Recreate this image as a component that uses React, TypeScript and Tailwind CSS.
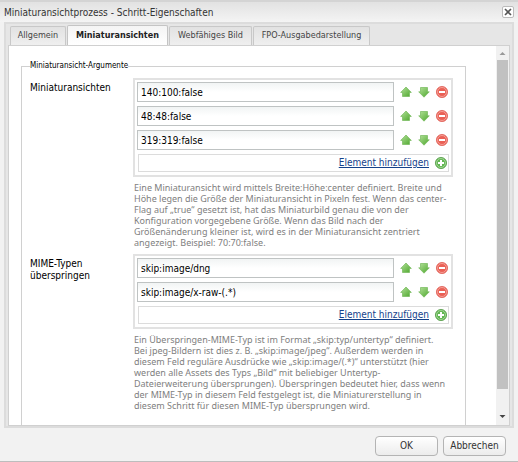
import type { ReactNode } from "react";

function ArrowUp() {
  return (
    <svg width="12" height="12" viewBox="0 0 12 12" aria-hidden="true">
      <defs>
        <linearGradient id="green" x1="0" y1="0" x2="1" y2="1">
          <stop offset="0" stopColor="#b4e29a" />
          <stop offset="1" stopColor="#4ca62c" />
        </linearGradient>
      </defs>
      <path d="M6 1 L11.3 6.4 L9.5 6.4 L9.5 10.5 L2.5 10.5 L2.5 6.4 L0.7 6.4 Z" fill="url(#green)" stroke="#74b95a" strokeWidth="0.7" />
    </svg>
  );
}

function ArrowDown() {
  return (
    <svg width="12" height="12" viewBox="0 0 12 12" aria-hidden="true">
      <path d="M6 11.2 L11.3 5.8 L9.5 5.8 L9.5 1.5 L2.5 1.5 L2.5 5.8 L0.7 5.8 Z" fill="url(#green)" stroke="#74b95a" strokeWidth="0.7" />
    </svg>
  );
}

function Minus() {
  return (
    <svg width="14" height="14" viewBox="0 0 14 14" aria-hidden="true">
      <circle cx="7" cy="7" r="5.6" fill="#ea6055" stroke="#df6259" strokeWidth="0.8" />
      <circle cx="7" cy="7" r="4.5" fill="none" stroke="#f7aca5" strokeWidth="0.8" />
      <rect x="4" y="6" width="6" height="2" fill="#fff" />
    </svg>
  );
}

function Plus() {
  return (
    <svg width="14" height="14" viewBox="0 0 14 14" aria-hidden="true">
      <circle cx="7" cy="7" r="5.6" fill="#62b552" stroke="#559c48" strokeWidth="0.8" />
      <circle cx="7" cy="7" r="4.5" fill="none" stroke="#b0dea4" strokeWidth="0.8" />
      <path d="M6 4h2v2h2v2h-2v2h-2v-2h-2v-2h2z" fill="#fff" />
    </svg>
  );
}

function Multifield({ id, label, values, children }: { id: string; label: string; values: string[]; children: ReactNode }) {
  return (
    <div className="flex items-start">
      <label htmlFor={id + "-0"} className="w-[103px] shrink-0 pt-1 pr-4 text-[10px] leading-3">
        {label}
      </label>
      <div className="min-w-0 flex-1">
        <div className="border-2 border-[#e2e2e2] px-[2px] pt-[2px] pb-[3px]">
          {values.map((value, i) => (
            <div key={value} className="mb-1 flex items-center">
              <input
                id={id + "-" + i}
                aria-label={label + " " + (i + 1)}
                defaultValue={value}
                className="h-5 min-w-0 flex-1 border border-[#bfc3c3] bg-linear-to-b from-[#f1f4f4] to-white to-50% px-[3px] text-[10px] text-black outline-none"
              />
              <button type="button" aria-label="Nach oben" className="ml-[6px] flex"><ArrowUp /></button>
              <button type="button" aria-label="Nach unten" className="ml-[6px] flex"><ArrowDown /></button>
              <button type="button" aria-label="Entfernen" className="ml-[5px] flex"><Minus /></button>
            </div>
          ))}
          <div className="ml-px flex h-[18px] items-center justify-end gap-[5px] border border-[#dcdcdc]">
            <a href="#" className="text-[10px] leading-3 text-[#15428b] underline">Element hinzufügen</a>
            <Plus />
          </div>
        </div>
        <p className="mt-[5px] pl-px font-['Noto_Sans',sans-serif] text-[9px] leading-[11px] whitespace-nowrap text-[#808080]">{children}</p>
      </div>
    </div>
  );
}

const tabs = ["Allgemein", "Miniaturansichten", "Webfähiges Bild", "FPO-Ausgabedarstellung"];
const tabWidths = ["w-[56px]", "w-[101px]", "w-[83px]", "w-[117px]"];

export default function App() {
  return (
    <div role="dialog" aria-label="Miniaturansichtprozess - Schritt-Eigenschaften" className="flex h-screen flex-col border-b border-[#bdbdbd] bg-[#f2f2f2] px-1 font-['DejaVu_Sans_Condensed','Noto_Sans',sans-serif] text-black">
      <header className="-mx-1 flex h-[22px] shrink-0 items-center justify-between border-t-2 border-[#d4d4d4] bg-linear-to-b from-[#e2e2e2] to-[#f4f4f4] pr-1 pl-1">
        <h1 className="text-[10px] text-[#333]">Miniaturansichtprozess - Schritt-Eigenschaften</h1>
        <button type="button" aria-label="Schließen" className="flex size-3 items-center justify-center rounded-xs border border-[#bbb] bg-white">
          <svg width="8" height="8" viewBox="0 0 8 8" aria-hidden="true">
            <path d="M1 1 L7 7 M7 1 L1 7" stroke="#555" strokeWidth="1.6" />
          </svg>
        </button>
      </header>

      <main className="flex min-h-0 flex-1 flex-col border-2 border-[#dcdcdc] bg-[#e6e6e6] px-[2px]">
        <div role="tablist" className="flex h-[21px] shrink-0 items-end gap-px px-[2px] text-[9px]">
          {tabs.map((tab, i) => (
            <button
              key={tab}
              type="button"
              role="tab"
              aria-selected={i === 1}
              className={
                tabWidths[i] +
                " shrink-0 rounded-t-xs border border-b-0 whitespace-nowrap " +
                (i === 1
                  ? "h-5 border-[#c4c4c4] bg-linear-to-b from-[#f4f4f4] to-white font-bold text-[#222]"
                  : "h-[19px] border-[#c8c8c8] bg-linear-to-b from-[#e2e2e2] to-[#efefef] text-[#444]")
              }
            >
              {tab}
            </button>
          ))}
        </div>

        <div className="flex min-h-0 flex-1 border border-[#d0d0d0] bg-white">
          <div className="min-w-0 flex-1 overflow-hidden pt-[14px] pr-[30px] pl-3">
            <fieldset className="h-[480px] min-w-0 border border-[#d0d0d0] pr-3 pl-2">
              <legend className="text-[8px] leading-3">Miniaturansicht-Argumente</legend>
              <div className="flex flex-col gap-[6px] pt-[6px]">
                <Multifield id="thumbs" label="Miniaturansichten" values={["140:100:false", "48:48:false", "319:319:false"]}>
                  Eine Miniaturansicht wird mittels Breite:Höhe:center definiert. Breite und<br />
                  Höhe legen die Größe der Miniaturansicht in Pixeln fest. Wenn das center-<br />
                  Flag auf „true“ gesetzt ist, hat das Miniaturbild genau die von der<br />
                  Konfiguration vorgegebene Größe. Wenn das Bild nach der<br />
                  Größenänderung kleiner ist, wird es in der Miniaturansicht zentriert<br />
                  angezeigt. Beispiel: 70:70:false.
                </Multifield>
                <Multifield id="mime" label="MIME-Typen überspringen" values={["skip:image/dng", "skip:image/x-raw-(.*)"]}>
                  Ein Überspringen-MIME-Typ ist im Format „skip:typ/untertyp“ definiert.<br />
                  Bei jpeg-Bildern ist dies z. B. „skip:image/jpeg“. Außerdem werden in<br />
                  diesem Feld reguläre Ausdrücke wie „skip:image/(.*)“ unterstützt (hier<br />
                  werden alle Assets des Typs „Bild“ mit beliebiger Untertyp-<br />
                  Dateierweiterung übersprungen). Überspringen bedeutet hier, dass wenn<br />
                  der MIME-Typ in diesem Feld festgelegt ist, die Miniaturerstellung in<br />
                  diesem Schritt für diesen MIME-Typ übersprungen wird.
                </Multifield>
              </div>
            </fieldset>
          </div>
          <div className="flex w-[13px] shrink-0 flex-col items-center bg-[#f1f1f1]">
            <svg width="13" height="14" viewBox="0 0 13 14" aria-hidden="true"><path d="M3.5 9 L6.5 6 L9.5 9 Z" fill="#999" /></svg>
            <div className="w-[11px] flex-1 bg-[#c1c1c1]" />
            <svg width="13" height="36" viewBox="0 0 13 36" aria-hidden="true"><path d="M3.5 26 L6.5 29 L9.5 26 Z" fill="#444" /></svg>
          </div>
        </div>
      </main>

      <footer className="flex h-[33px] shrink-0 items-start justify-end gap-[5px] pt-2 pr-2">
        {["OK", "Abbrechen"].map((name) => (
          <button key={name} type="button" className="h-5 w-[63px] rounded-sm border border-[#b4b4b4] bg-linear-to-b from-white to-[#ececec] text-[10px] leading-3 text-[#333]">
            {name}
          </button>
        ))}
      </footer>
    </div>
  );
}
